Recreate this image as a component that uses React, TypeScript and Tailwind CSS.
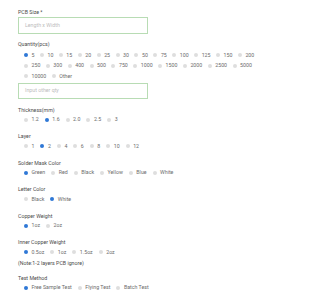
import React from "react";

type Opt = { label: string; selected?: boolean };

function Radio({ label, selected }: Opt) {
  return (
    <div className="flex items-center h-[10.5px]">
      <span
        className={
          "inline-block w-[4px] h-[4px] rounded-full mr-[3.5px] " +
          (selected ? "bg-[#2f78d6]" : "bg-[#dedede]")
        }
      />
      <span className="text-[5.25px] leading-none text-[#6b6b6b]">{label}</span>
    </div>
  );
}

function Label({ children }: { children: React.ReactNode }) {
  return (
    <div className="text-[5.25px] leading-[8px] h-[8px] text-[#4a4a4a]">
      {children}
    </div>
  );
}

function Group({
  title,
  options,
  selected,
}: {
  title: string;
  options: string[];
  selected: string;
}) {
  return (
    <div className="mt-[7px]">
      <Label>{title}</Label>
      <div className="flex flex-wrap gap-x-[6px] mt-[1px] pl-[6px]">
        {options.map((o) => (
          <Radio key={o} label={o} selected={o === selected} />
        ))}
      </div>
    </div>
  );
}

const quantities = [
  "5", "10", "15", "20", "25", "30", "50", "75", "100", "125", "150", "200",
  "250", "300", "400", "500", "750", "1000", "1500", "2000", "2500", "5000",
  "10000", "Other",
];

export default function App() {
  return (
    <div
      className="w-[269px] h-[300px] bg-white pl-[18px] pt-[8px] overflow-hidden"
      style={{ fontFamily: "Roboto, 'Noto Sans', sans-serif" }}
    >
      <Label>PCB Size *</Label>
      <div className="mt-[1px] w-[130px] h-[17px] border border-[#b8dcb4] flex items-center px-[6px]">
        <span className="text-[5.25px] text-[#bdbdbd]">Length x Width</span>
      </div>

      <div className="mt-[6px]">
        <Label>Quantity(pcs)</Label>
        <div className="flex flex-wrap gap-x-[5.5px] mt-[2px] pl-[6px] w-[248px]">
          {quantities.map((q) => (
            <Radio key={q} label={q} selected={q === "5"} />
          ))}
        </div>
      </div>

      <div className="mt-[1px] w-[130px] h-[16px] border border-[#b8dcb4] flex items-center px-[6px]">
        <span className="text-[5.25px] text-[#bdbdbd]">Input other qty</span>
      </div>

      <div className="mt-[1px]">
        <Group
          title="Thickness(mm)"
          options={["1.2", "1.6", "2.0", "2.5", "3"]}
          selected="1.6"
        />
      </div>
      <Group
        title="Layer"
        options={["1", "2", "4", "6", "8", "10", "12"]}
        selected="2"
      />
      <Group
        title="Solder Mask Color"
        options={["Green", "Red", "Black", "Yellow", "Blue", "White"]}
        selected="Green"
      />
      <Group
        title="Letter Color"
        options={["Black", "White"]}
        selected="White"
      />
      <Group title="Copper Weight" options={["1oz", "2oz"]} selected="1oz" />
      <Group
        title="Inner Copper Weight"
        options={["0.5oz", "1oz", "1.5oz", "2oz"]}
        selected="0.5oz"
      />
      <div className="mt-[1px]">
        <Label>(Note:1-2 layers PCB ignore)</Label>
      </div>
      <div className="mt-[3px]">
        <Group
          title="Test Method"
          options={["Free Sample Test", "Flying Test", "Batch Test"]}
          selected="Free Sample Test"
        />
      </div>
    </div>
  );
}
